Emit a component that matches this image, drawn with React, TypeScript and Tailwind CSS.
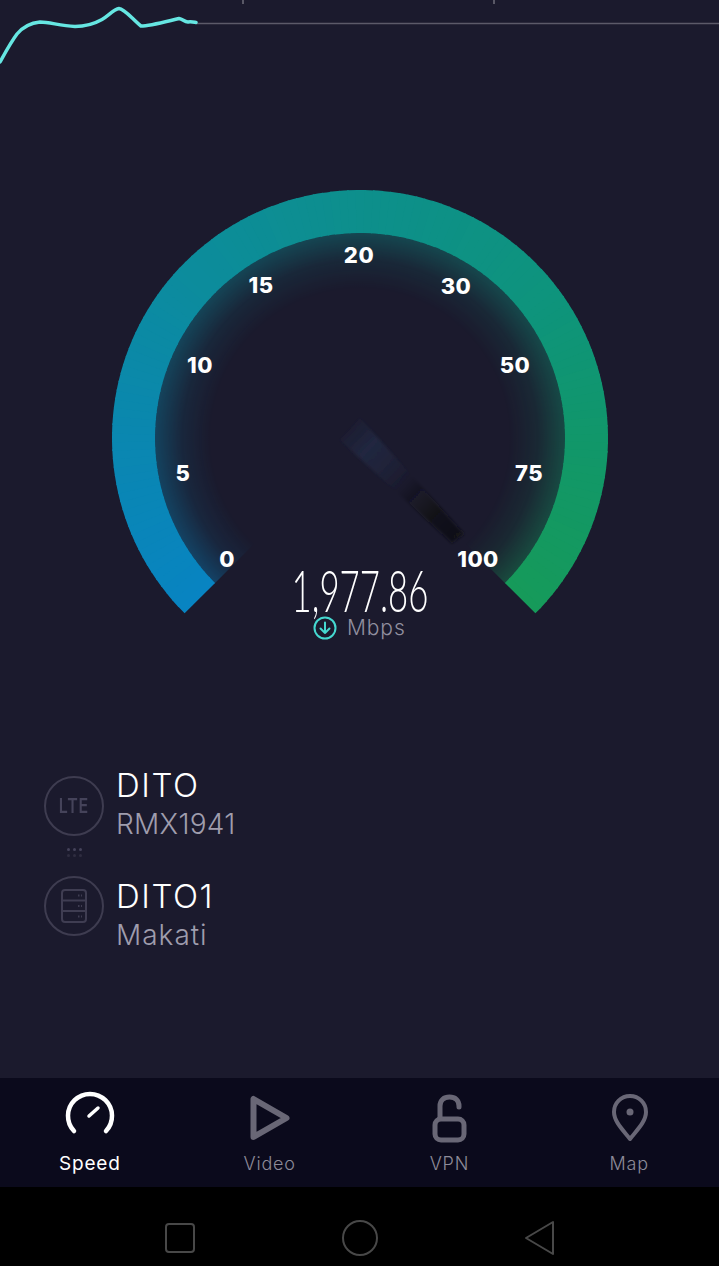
import React from "react";

const ticks: [string, number, number][] = [
  ["20", 249, 67],
  ["15", 151, 97],
  ["30", 346, 98],
  ["10", 90, 177],
  ["50", 405, 177],
  ["5", 73, 285],
  ["75", 419, 285],
  ["0", 117, 371],
  ["100", 368, 371],
];

const stops: [number, number[]][] = [
  [0, [8, 132, 194]],
  [45, [10, 135, 176]],
  [90, [12, 140, 156]],
  [135, [13, 143, 140]],
  [190, [14, 148, 124]],
  [225, [17, 151, 106]],
  [270, [22, 154, 90]],
];

function colorAt(a: number) {
  for (let i = 0; i < stops.length - 1; i++) {
    const [a0, c0] = stops[i];
    const [a1, c1] = stops[i + 1];
    if (a <= a1) {
      const t = (a - a0) / (a1 - a0);
      return `rgb(${c0.map((v, j) => Math.round(v + (c1[j] - v) * t)).join(",")})`;
    }
  }
  return "rgb(22,154,90)";
}

// gauge geometry inside the 500 x 460 box: centre (250,250)
function Gauge() {
  const c = 250;
  const pt = (r: number, a: number) => {
    const rad = ((a + 135) * Math.PI) / 180;
    return `${(c + r * Math.cos(rad)).toFixed(2)} ${(c + r * Math.sin(rad)).toFixed(2)}`;
  };
  const seg = (ro: number, ri: number, a: number, b: number) =>
    `M ${pt(ro, a)} A ${ro} ${ro} 0 0 1 ${pt(ro, b)} L ${pt(ri, b)} A ${ri} ${ri} 0 0 0 ${pt(ri, a)} Z`;
  const steps = Array.from({ length: 135 }, (_, i) => i * 2);
  return (
    <svg width="500" height="460" viewBox="0 0 500 460" className="block">
      <defs>
        <radialGradient id="fade" gradientUnits="userSpaceOnUse" cx="250" cy="250" r="207">
          <stop offset="0.72" stopColor="#fff" stopOpacity="0" />
          <stop offset="0.86" stopColor="#fff" stopOpacity="0.12" />
          <stop offset="1" stopColor="#fff" stopOpacity="0.4" />
        </radialGradient>
        <mask id="glowMask" maskUnits="userSpaceOnUse" x="0" y="0" width="500" height="460">
          <rect width="500" height="460" fill="url(#fade)" />
        </mask>
        <linearGradient id="needle" gradientUnits="userSpaceOnUse" x1="230" y1="235" x2="354" y2="350">
          <stop offset="0" stopColor="#25304f" stopOpacity="0" />
          <stop offset="0.14" stopColor="#25304f" stopOpacity="0.3" />
          <stop offset="0.22" stopColor="#25304f" stopOpacity="0.55" />
          <stop offset="0.36" stopColor="#25304f" stopOpacity="0.35" />
          <stop offset="0.52" stopColor="#25304f" stopOpacity="0" />
          <stop offset="0.52" stopColor="#121214" stopOpacity="0" />
          <stop offset="0.64" stopColor="#121214" stopOpacity="0.35" />
          <stop offset="0.8" stopColor="#121214" stopOpacity="0.85" />
          <stop offset="1" stopColor="#121214" stopOpacity="1" />
        </linearGradient>
        <filter id="soft" x="-10%" y="-10%" width="120%" height="120%">
          <feGaussianBlur stdDeviation="1.500" />
        </filter>
      </defs>
      <g mask="url(#glowMask)">
        {steps.map((a) => (
          <path key={a} d={seg(206, 130, a, Math.min(a + 2.4, 270))} fill={colorAt(a + 1)} />
        ))}
      </g>
      {steps.map((a) => (
        <path key={a} d={seg(248, 205, a, Math.min(a + 2.4, 270))} fill={colorAt(a + 1)} />
      ))}
      <polygon points="250,230 230,252 342,355 354,346" fill="url(#needle)" filter="url(#soft)" />
    </svg>
  );
}

function Spark() {
  return (
    <svg width="719" height="64" viewBox="0 0 719 64" className="block">
      <path d="M196 23.500H719" stroke="#5c5a69" strokeWidth="1.500" />
      <path d="M243 0V4M494 0V4" stroke="#6f6d7a" strokeWidth="1.500" />
      <path
        d="M0 62C5 53 11 42 17 34C22 28 30 23 40 22C50 22 60 26 75 26.500C85 26.500 94 24 102 19.500C108 16 114 9 119 8.500C125 9 133 20 141 26C150 26 168 21 179 18.500C183 19 184 22 188 22C191 21.500 193 22 196 22.500"
        fill="none"
        stroke="#66e6e2"
        strokeWidth="3.500"
        strokeLinecap="round"
      />
    </svg>
  );
}

function SpeedIcon() {
  return (
    <svg width="56" height="56" viewBox="0 0 56 56" fill="none" stroke="#fff" strokeLinecap="round">
      <path d="M12 42A22 22 0 1 1 44 42" strokeWidth="4.500" />
      <path d="M27 27L36 19" strokeWidth="3.500" />
    </svg>
  );
}
function PlayIcon() {
  return (
    <svg width="56" height="56" viewBox="0 0 56 56" fill="none" stroke="#696776" strokeWidth="6" strokeLinejoin="round">
      <path d="M11.500 10L11.500 48L44.500 29Z" />
    </svg>
  );
}
function LockIcon() {
  return (
    <svg width="56" height="56" viewBox="0 0 56 56" fill="none" stroke="#696776" strokeWidth="5" strokeLinecap="round">
      <rect x="14" y="30" width="29" height="21" rx="6" />
      <path d="M19 29V17C19 11 23 8 28.500 8C34 8 38 11 38 17V18" />
    </svg>
  );
}
function PinIcon() {
  return (
    <svg width="56" height="56" viewBox="0 0 56 56" fill="none" stroke="#696776" strokeWidth="4" strokeLinejoin="round">
      <path d="M29 50C23 42 13 33 13 23C13 14 20 7 29 7C38 7 45 14 45 23C45 33 35 42 29 50Z" />
      <circle cx="29" cy="23" r="3.500" fill="#696776" stroke="none" />
    </svg>
  );
}

function ServerIcon() {
  return (
    <svg width="26" height="34" viewBox="0 0 26 34" fill="none" stroke="#3f3d52" strokeWidth="2">
      <rect x="1" y="1" width="24" height="32" rx="3" />
      <path d="M1 11.500H25M1 22H25" />
      <path d="M17 6.500H21M17 17H21M17 27.500H21" strokeWidth="2" strokeDasharray="1.500 1.500" />
    </svg>
  );
}

function Tab({ label, active, children }: { label: string; active?: boolean; children: React.ReactNode }) {
  return (
    <div className="flex flex-col items-center pt-[11px]">
      <div className="h-[56px]">{children}</div>
      <span
        className={
          active
            ? "mt-[7px] text-[19px] leading-[24px] tracking-[0.8px] text-white"
            : "mt-[7px] text-[18px] leading-[24px] font-light tracking-[0.8px] text-[#8d8b99]"
        }
      >
        {label}
      </span>
    </div>
  );
}

function Circle({ children }: { children: React.ReactNode }) {
  return (
    <div className="flex h-[60px] w-[60px] items-center justify-center rounded-full border-2 border-[#3e3c50]">
      {children}
    </div>
  );
}

function Label({ title, sub, spread }: { title: string; sub: string; spread: string }) {
  return (
    <div className="flex flex-col">
      <span className="text-[33px] leading-[36px] font-light tracking-[1.5px] text-white">{title}</span>
      <span className={`mt-[4px] text-[28px] leading-[34px] font-light text-[#9f9dad] ${spread}`}>{sub}</span>
    </div>
  );
}

export default function App() {
  return (
    <div className="flex h-[1266px] w-[719px] flex-col overflow-hidden bg-[#1b1a2d] font-['Inter',sans-serif]">
      <Spark />
      <div className="relative mt-[124px] ml-[110px] h-[460px] w-[500px] shrink-0">
        <Gauge />
        {ticks.map(([t, x, y]) => (
          <span
            key={t}
            className="absolute -translate-x-1/2 -translate-y-1/2 text-[22px] leading-none font-extrabold tracking-[0.5px] text-white"
            style={{ left: x, top: y }}
          >
            {t}
          </span>
        ))}
        <span className="absolute top-[378px] left-0 w-full origin-center scale-x-[0.6] text-center font-['Lato',sans-serif] text-[58px] leading-[48px] font-light text-white">
          1,977.86
        </span>
        <div className="absolute top-[427px] left-[203px] flex items-center gap-[10px]">
          <svg width="24" height="24" viewBox="0 0 24 24" fill="none" stroke="#45d8d0" strokeWidth="2" strokeLinecap="round" strokeLinejoin="round">
            <circle cx="12" cy="12" r="10.500" />
            <path d="M12 6.500V17M7.500 12.500L12 17L16.500 12.500" />
          </svg>
          <span className="text-[21px] leading-[26px] font-light tracking-[0.9px] text-[#918f9f]">Mbps</span>
        </div>
      </div>
      <div className="mt-[128px] ml-[44px] flex gap-3">
        <div className="flex flex-col">
          <Circle>
            <span className="scale-x-[0.8] text-[20px] leading-none font-semibold tracking-[1px] text-[#45435a]">LTE</span>
          </Circle>
          <div className="flex h-[40px] w-[60px] flex-col items-center justify-center gap-[3px] pb-[8px]">
            <div className="flex gap-[3px]">
              <i className="h-[3px] w-[3px] rounded-full bg-[#45435a]" />
              <i className="h-[3px] w-[3px] rounded-full bg-[#45435a]" />
              <i className="h-[3px] w-[3px] rounded-full bg-[#45435a]" />
            </div>
            <div className="flex gap-[3px]">
              <i className="h-[3px] w-[3px] rounded-full bg-[#2f2d40]" />
              <i className="h-[3px] w-[3px] rounded-full bg-[#2f2d40]" />
              <i className="h-[3px] w-[3px] rounded-full bg-[#2f2d40]" />
            </div>
          </div>
          <Circle>
            <ServerIcon />
          </Circle>
        </div>
        <div className="-mt-[9px] flex flex-col gap-[37px]">
          <Label title="DITO" sub="RMX1941" spread="tracking-[0.3px]" />
          <Label title="DITO1" sub="Makati" spread="tracking-[1px]" />
        </div>
      </div>
      <div className="mt-auto grid h-[109px] shrink-0 grid-cols-4 bg-[#0b0a1c]">
        <Tab label="Speed" active>
          <SpeedIcon />
        </Tab>
        <Tab label="Video">
          <PlayIcon />
        </Tab>
        <Tab label="VPN">
          <LockIcon />
        </Tab>
        <Tab label="Map">
          <PinIcon />
        </Tab>
      </div>
      <div className="flex h-[79px] shrink-0 items-center justify-center bg-black pt-[23px]">
        <div className="flex w-[180px] justify-center">
          <div className="h-[30px] w-[30px] rounded-[4px] border-2 border-[#484848]" />
        </div>
        <div className="flex w-[180px] justify-center">
          <div className="h-[36px] w-[36px] rounded-full border-2 border-[#484848]" />
        </div>
        <div className="flex w-[180px] justify-center">
          <svg width="32" height="36" viewBox="0 0 32 36" fill="none" stroke="#484848" strokeWidth="2" strokeLinejoin="round">
            <path d="M2 18L29 2V34Z" />
          </svg>
        </div>
      </div>
    </div>
  );
}
